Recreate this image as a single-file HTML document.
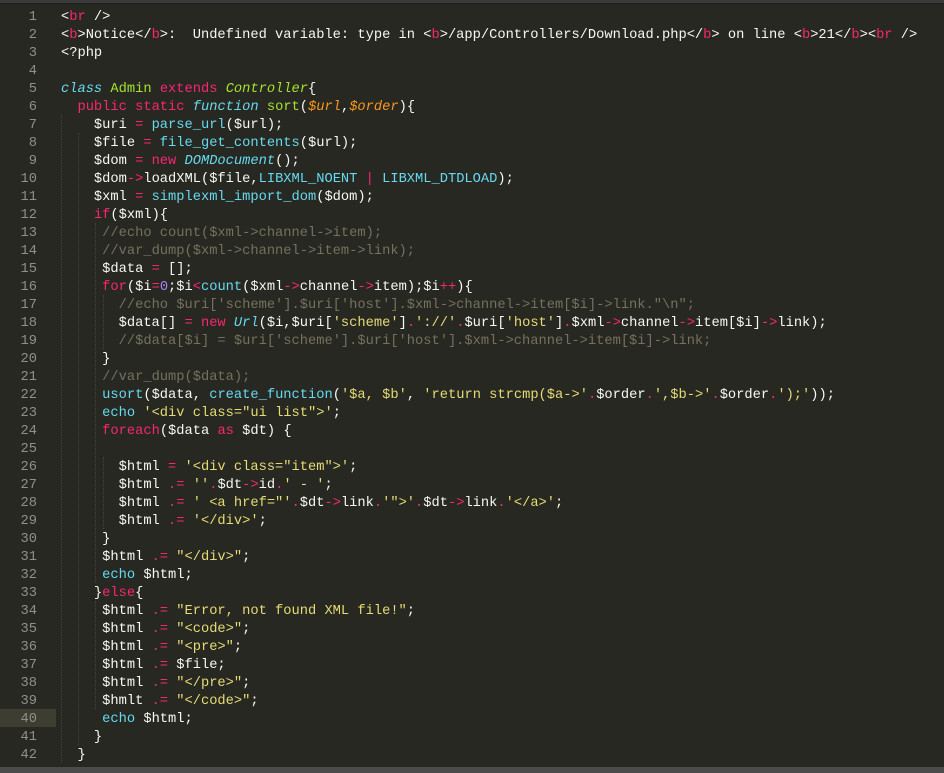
<!DOCTYPE html>
<html><head><meta charset="utf-8"><style>
html,body{margin:0;padding:0;}
body{width:944px;height:773px;background:#272822;position:relative;overflow:hidden;font-family:"Liberation Mono",monospace;font-size:13.73px;color:#F8F8F2;}
.top{position:absolute;left:0;top:0;width:944px;height:3px;background:#3a3a3a;border-bottom:1px solid #1e1f1a;}
.bot{position:absolute;left:0;top:767px;width:944px;height:6px;background:#4b4b4b;}
.hl{position:absolute;left:0;top:709px;width:56px;height:18px;background:#3E3D32;}
.w{position:absolute;left:0;top:2px;width:944px;height:765px;}
.ln{position:absolute;left:0;width:37px;text-align:right;color:#8F908A;line-height:18px;height:18px;}
.l{position:absolute;left:61px;white-space:pre;line-height:18px;height:18px;}
.g{position:absolute;width:0;border-left:1px dotted #44443c;}
.p{color:#F92672}.s{color:#E6DB74}.c{color:#66D9EF}.i{font-style:italic}.gr{color:#A6E22E}.o{color:#FD971F;font-style:italic}.cm{color:#75715E}.n{color:#AE81FF}
</style></head><body>
<div class="top"></div>
<div class="hl"></div>
<div class="g" style="left:61px;top:115px;height:648px"></div>
<div class="g" style="left:78px;top:133px;height:612px"></div>
<div class="g" style="left:95px;top:223px;height:360px"></div>
<div class="g" style="left:95px;top:601px;height:108px"></div>
<div class="g" style="left:103px;top:295px;height:54px"></div>
<div class="g" style="left:103px;top:457px;height:72px"></div>
<div class="w">
<div class="ln" style="top:7px">1</div><div class="ln" style="top:25px">2</div><div class="ln" style="top:43px">3</div><div class="ln" style="top:61px">4</div><div class="ln" style="top:79px">5</div><div class="ln" style="top:97px">6</div><div class="ln" style="top:115px">7</div><div class="ln" style="top:133px">8</div><div class="ln" style="top:151px">9</div><div class="ln" style="top:169px">10</div><div class="ln" style="top:187px">11</div><div class="ln" style="top:205px">12</div><div class="ln" style="top:223px">13</div><div class="ln" style="top:241px">14</div><div class="ln" style="top:259px">15</div><div class="ln" style="top:277px">16</div><div class="ln" style="top:295px">17</div><div class="ln" style="top:313px">18</div><div class="ln" style="top:331px">19</div><div class="ln" style="top:349px">20</div><div class="ln" style="top:367px">21</div><div class="ln" style="top:385px">22</div><div class="ln" style="top:403px">23</div><div class="ln" style="top:421px">24</div><div class="ln" style="top:439px">25</div><div class="ln" style="top:457px">26</div><div class="ln" style="top:475px">27</div><div class="ln" style="top:493px">28</div><div class="ln" style="top:511px">29</div><div class="ln" style="top:529px">30</div><div class="ln" style="top:547px">31</div><div class="ln" style="top:565px">32</div><div class="ln" style="top:583px">33</div><div class="ln" style="top:601px">34</div><div class="ln" style="top:619px">35</div><div class="ln" style="top:637px">36</div><div class="ln" style="top:655px">37</div><div class="ln" style="top:673px">38</div><div class="ln" style="top:691px">39</div><div class="ln" style="top:709px">40</div><div class="ln" style="top:727px">41</div><div class="ln" style="top:745px">42</div>

<div class="l" style="top:7px">&lt;<span class="p">br</span> /&gt;</div>
<div class="l" style="top:25px">&lt;<span class="p">b</span>&gt;Notice&lt;/<span class="p">b</span>&gt;:  Undefined variable: type in &lt;<span class="p">b</span>&gt;/app/Controllers/Download.php&lt;/<span class="p">b</span>&gt; on line &lt;<span class="p">b</span>&gt;21&lt;/<span class="p">b</span>&gt;&lt;<span class="p">br</span> /&gt;</div>
<div class="l" style="top:43px">&lt;?php</div>
<div class="l" style="top:79px"><span class="c i">class</span> <span class="gr">Admin</span> <span class="p">extends</span> <span class="gr i">Controller</span>{</div>
<div class="l" style="top:97px">  <span class="p">public</span> <span class="p">static</span> <span class="c i">function</span> <span class="gr">sort</span>(<span class="o">$url</span>,<span class="o">$order</span>){</div>
<div class="l" style="top:115px">    $uri <span class="p">=</span> <span class="c">parse_url</span>($url);</div>
<div class="l" style="top:133px">    $file <span class="p">=</span> <span class="c">file_get_contents</span>($url);</div>
<div class="l" style="top:151px">    $dom <span class="p">=</span> <span class="p">new</span> <span class="c i">DOMDocument</span>();</div>
<div class="l" style="top:169px">    $dom<span class="p">-&gt;</span>loadXML($file,<span class="c">LIBXML_NOENT</span> <span class="p">|</span> <span class="c">LIBXML_DTDLOAD</span>);</div>
<div class="l" style="top:187px">    $xml <span class="p">=</span> <span class="c">simplexml_import_dom</span>($dom);</div>
<div class="l" style="top:205px">    <span class="p">if</span>($xml){</div>
<div class="l" style="top:223px">     <span class="cm">//echo count($xml-&gt;channel-&gt;item);</span></div>
<div class="l" style="top:241px">     <span class="cm">//var_dump($xml-&gt;channel-&gt;item-&gt;link);</span></div>
<div class="l" style="top:259px">     $data <span class="p">=</span> [];</div>
<div class="l" style="top:277px">     <span class="p">for</span>($i<span class="p">=</span><span class="n">0</span>;$i<span class="p">&lt;</span><span class="c">count</span>($xml<span class="p">-&gt;</span>channel<span class="p">-&gt;</span>item);$i<span class="p">++</span>){</div>
<div class="l" style="top:295px">       <span class="cm">//echo $uri['scheme'].$uri['host'].$xml-&gt;channel-&gt;item[$i]-&gt;link."\n";</span></div>
<div class="l" style="top:313px">       $data[] <span class="p">=</span> <span class="p">new</span> <span class="c i">Url</span>($i,$uri[<span class="s">'scheme'</span>]<span class="p">.</span><span class="s">'://'</span><span class="p">.</span>$uri[<span class="s">'host'</span>]<span class="p">.</span>$xml<span class="p">-&gt;</span>channel<span class="p">-&gt;</span>item[$i]<span class="p">-&gt;</span>link);</div>
<div class="l" style="top:331px">       <span class="cm">//$data[$i] = $uri['scheme'].$uri['host'].$xml-&gt;channel-&gt;item[$i]-&gt;link;</span></div>
<div class="l" style="top:349px">     }</div>
<div class="l" style="top:367px">     <span class="cm">//var_dump($data);</span></div>
<div class="l" style="top:385px">     <span class="c">usort</span>($data, <span class="c">create_function</span>(<span class="s">'$a, $b'</span>, <span class="s">'return strcmp($a-&gt;'</span><span class="p">.</span>$order<span class="p">.</span><span class="s">',$b-&gt;'</span><span class="p">.</span>$order<span class="p">.</span><span class="s">');'</span>));</div>
<div class="l" style="top:403px">     <span class="c">echo</span> <span class="s">'&lt;div class="ui list"&gt;'</span>;</div>
<div class="l" style="top:421px">     <span class="p">foreach</span>($data <span class="p">as</span> $dt) {</div>
<div class="l" style="top:457px">       $html <span class="p">=</span> <span class="s">'&lt;div class="item"&gt;'</span>;</div>
<div class="l" style="top:475px">       $html <span class="p">.=</span> <span class="s">''</span><span class="p">.</span>$dt<span class="p">-&gt;</span>id<span class="p">.</span><span class="s">' - '</span>;</div>
<div class="l" style="top:493px">       $html <span class="p">.=</span> <span class="s">' &lt;a href="'</span><span class="p">.</span>$dt<span class="p">-&gt;</span>link<span class="p">.</span><span class="s">'"&gt;'</span><span class="p">.</span>$dt<span class="p">-&gt;</span>link<span class="p">.</span><span class="s">'&lt;/a&gt;'</span>;</div>
<div class="l" style="top:511px">       $html <span class="p">.=</span> <span class="s">'&lt;/div&gt;'</span>;</div>
<div class="l" style="top:529px">     }</div>
<div class="l" style="top:547px">     $html <span class="p">.=</span> <span class="s">"&lt;/div&gt;"</span>;</div>
<div class="l" style="top:565px">     <span class="c">echo</span> $html;</div>
<div class="l" style="top:583px">    }<span class="p">else</span>{</div>
<div class="l" style="top:601px">     $html <span class="p">.=</span> <span class="s">"Error, not found XML file!"</span>;</div>
<div class="l" style="top:619px">     $html <span class="p">.=</span> <span class="s">"&lt;code&gt;"</span>;</div>
<div class="l" style="top:637px">     $html <span class="p">.=</span> <span class="s">"&lt;pre&gt;"</span>;</div>
<div class="l" style="top:655px">     $html <span class="p">.=</span> $file;</div>
<div class="l" style="top:673px">     $html <span class="p">.=</span> <span class="s">"&lt;/pre&gt;"</span>;</div>
<div class="l" style="top:691px">     $hmlt <span class="p">.=</span> <span class="s">"&lt;/code&gt;"</span>;</div>
<div class="l" style="top:709px">     <span class="c">echo</span> $html;</div>
<div class="l" style="top:727px">    }</div>
<div class="l" style="top:745px">  }</div>
</div>
<div class="bot"></div>
</body></html>
